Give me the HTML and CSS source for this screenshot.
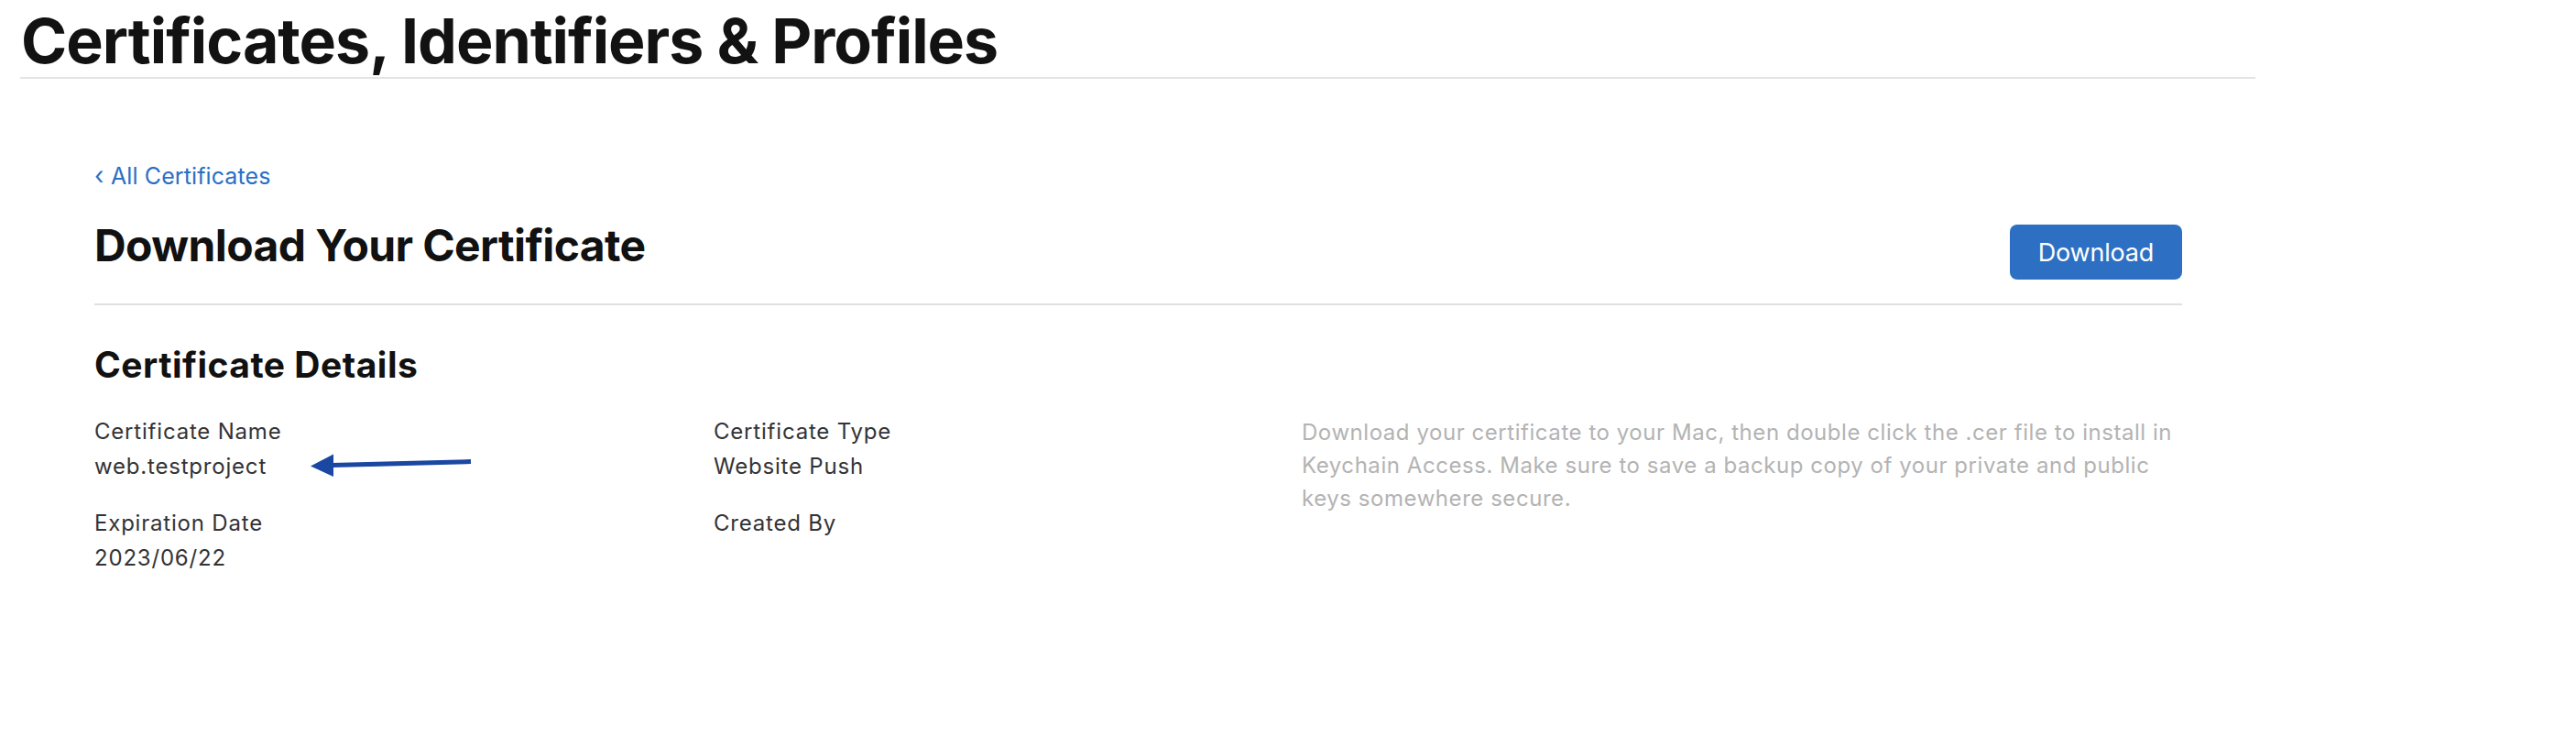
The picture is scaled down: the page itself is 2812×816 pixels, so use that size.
FILE: index.html
```html
<!DOCTYPE html>
<html lang="en">
<head>
<meta charset="utf-8">
<title>Certificates, Identifiers &amp; Profiles</title>
<link rel="stylesheet" href="styles.css">
</head>
<body>
  <header class="page-header">
    <h1 class="page-title">Certificates, Identifiers &amp; Profiles</h1>
  </header>
  <main class="content">
    <a class="back-link" href="#"><span class="chev">‹</span>All Certificates</a>
    <div class="title-row">
      <h2 class="section-title">Download Your Certificate</h2>
      <button class="btn-primary" type="button">Download</button>
    </div>
    <h3 class="details-title">Certificate Details</h3>
    <div class="details-grid">
      <div class="col">
        <div class="field field-annotated">
          <div class="label">Certificate Name</div>
          <div class="value">web.testproject</div>
          <svg class="annot-arrow" width="184" height="30" viewBox="0 0 184 30" aria-hidden="true">
            <path d="M26 14.6 L178 10.6" stroke="#1a47a2" stroke-width="5" fill="none" stroke-linecap="butt"/>
            <path d="M3 15.5 L28 2.5 L28 27 Z" fill="#1a47a2"/>
          </svg>
        </div>
        <div class="field">
          <div class="label">Expiration Date</div>
          <div class="value">2023/06/22</div>
        </div>
      </div>
      <div class="col">
        <div class="field">
          <div class="label">Certificate Type</div>
          <div class="value">Website Push</div>
        </div>
        <div class="field">
          <div class="label">Created By</div>
          <div class="value"></div>
        </div>
      </div>
      <p class="description">Download your certificate to your Mac, then double click the .cer file to install in Keychain Access. Make sure to save a backup copy of your private and public keys somewhere secure.</p>
    </div>
  </main>
</body>
</html>
```

FILE: styles.css
```css
html, body {
  margin: 0;
  padding: 0;
  background: #ffffff;
}

body {
  font-family: Inter, "Liberation Sans", sans-serif;
  color: #111111;
}

.page-header {
  margin-left: 22px;
  width: 2440px;
  padding-top: 5px;
  border-bottom: 2px solid #e4e4e4;
}

.page-title {
  margin: 0;
  font-size: 68px;
  line-height: 79px;
  font-weight: 700;
  letter-spacing: -1.0px;
  color: #121212;
  padding-left: 1px;
}

.content {
  margin-left: 103px;
  width: 2279px;
  padding-top: 91px;
}

.back-link {
  display: inline-flex;
  align-items: baseline;
  font-size: 25px;
  line-height: 30px;
  color: #2b6fc5;
  text-decoration: none;
  letter-spacing: 0.1px;
}

.chev {
  display: inline-block;
  width: 18px;
  font-size: 27px;
}

.title-row {
  display: flex;
  justify-content: space-between;
  align-items: flex-start;
  margin-top: 30px;
  padding-bottom: 26px;
  border-bottom: 2px solid #e0e0e0;
}

.section-title {
  margin: 0;
  padding-top: 2px;
  font-size: 48px;
  line-height: 58px;
  font-weight: 700;
  letter-spacing: -0.6px;
  color: #111111;
}

.btn-primary {
  margin-top: 8px;
  width: 188px;
  height: 60px;
  border: none;
  border-radius: 8px;
  background: #2d70c3;
  color: #ffffff;
  font-family: Inter, "Liberation Sans", sans-serif;
  font-size: 27px;
  letter-spacing: -0.2px;
  padding: 0;
}

.details-title {
  margin: 42px 0 0 0;
  font-size: 39px;
  line-height: 46px;
  font-weight: 700;
  letter-spacing: 0.5px;
  color: #111111;
}

.details-grid {
  display: grid;
  grid-template-columns: 676px 642px 1fr;
  margin-top: 31px;
}

.col {
  display: flex;
  flex-direction: column;
  gap: 24px;
}

.field {
  font-size: 24px;
  line-height: 38px;
  letter-spacing: 0.8px;
  color: #333336;
}

.field-annotated {
  position: relative;
}

.value {
  min-height: 38px;
}

.annot-arrow {
  position: absolute;
  left: 233px;
  top: 41px;
}

.description {
  margin: 2px 0 0 0;
  font-size: 24px;
  line-height: 36px;
  letter-spacing: 0.55px;
  color: #b3b3b3;
}
```
